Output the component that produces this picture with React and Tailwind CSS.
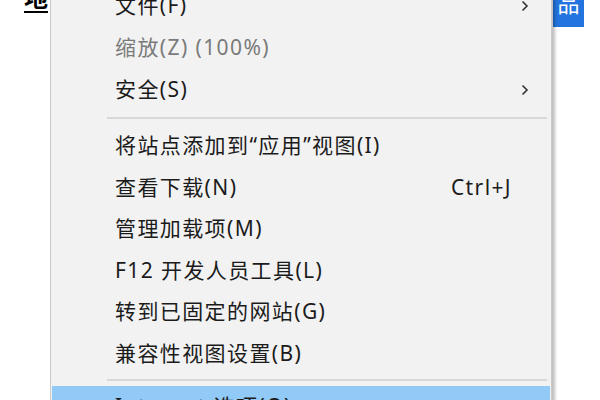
import React from 'react';

const font = { fontFamily: '"Noto Sans", "Noto Sans CJK SC", sans-serif' };

const Chevron = () => (
  <svg width="8" height="12" viewBox="0 0 8 12" className="text-[#333]">
    <polyline points="1.5,1.5 6,6 1.5,10.5" fill="none" stroke="currentColor" strokeWidth="1.6" />
  </svg>
);

const Item = ({ label, hint, sub, disabled, h = 'h-[41.5px]' }) => (
  <div className={`${h} flex items-center pl-[64px] pr-[22px] shrink-0`}>
    <span className={`flex-1 text-[21px] tracking-[1.4px] ${disabled ? 'text-[#7a7a7a]' : 'text-[#1b1b1b]'}`}>{label}</span>
    {hint && <span className="text-[21px] tracking-[1.4px] text-[#1b1b1b] mr-[17px]">{hint}</span>}
    {sub && <Chevron />}
  </div>
);

const Separator = ({ h }) => (
  <div className={`${h} flex items-center pl-[56px] pr-[4px] shrink-0`}>
    <div className="h-[2px] w-full bg-[#d8d8d8]" />
  </div>
);

export default function App() {
  return (
    <div className="w-[600px] h-[400px] bg-white overflow-hidden relative" style={font}>
      {/* page behind the menu */}
      <div className="absolute left-[24px] -top-[14px] text-[24px] font-bold text-black leading-none border-b-2 border-black pb-[1px]">地</div>
      <div className="absolute left-[553px] top-0 w-[31px] h-[27px] bg-[#2374de] overflow-hidden flex justify-center">
        <span className="text-white text-[22px] leading-none -mt-[8px]">品</span>
      </div>

      {/* context menu */}
      <div className="absolute left-[50px] -top-[16px] w-[502px] h-[430px] bg-[#f2f2f2] border border-[#c9c9c9] shadow-[3px_0_3px_rgba(0,0,0,0.25)] flex flex-col">
        <Item label="文件(F)" sub h="h-[42px]" />
        <Item label="缩放(Z) (100%)" disabled h="h-[42px]" />
        <Item label="安全(S)" sub h="h-[42px]" />
        <Separator h="h-[14px]" />
        <Item label="将站点添加到“应用”视图(I)" />
        <Item label="查看下载(N)" hint="Ctrl+J" />
        <Item label="管理加载项(M)" />
        <Item label="F12 开发人员工具(L)" />
        <Item label="转到已固定的网站(G)" />
        <Item label="兼容性视图设置(B)" />
        <Separator h="h-[12px]" />
        <div className="mx-[1px] h-[41.5px] bg-[#91c9f7] flex items-center pl-[63px] shrink-0">
          <span className="text-[21px] tracking-[1.4px] text-[#1b1b1b]">Internet 选项(O)</span>
        </div>
      </div>
    </div>
  );
}
